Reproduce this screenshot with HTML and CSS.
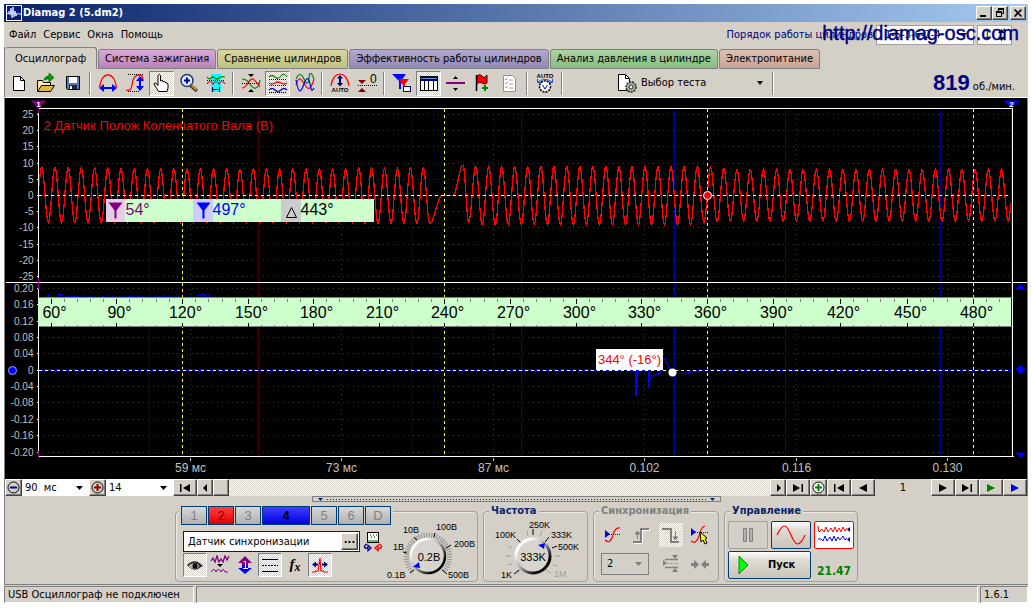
FILE: index.html
```html
<!DOCTYPE html>
<html lang="ru">
<head>
<meta charset="utf-8">
<title>Diamag 2 (5.dm2)</title>
<link rel="stylesheet" href="styles.css">
</head>
<body>
<div class="window">
  <header class="titlebar">
    <svg class="app-icon" width="16" height="16" viewBox="0 0 16 16"><rect width="16" height="16" fill="#fff"/><rect x="1" y="1" width="14" height="14" fill="#0a1a80"/><path d="M1 8.500h2V6l1 4 1-7 1 10 1-11 1 10 1-6 1 5 1-3 1 1h3" fill="none" stroke="#d8e4ff"/></svg>
    <h1>Diamag 2 (5.dm2)</h1>
    <div class="win-buttons">
      <button class="raised" aria-label="Свернуть"><svg width="12" height="10" viewBox="0 0 12 10"><path d="M2 7h6v2H2z"/></svg></button>
      <button class="raised" aria-label="Восстановить"><svg width="12" height="10" viewBox="0 0 12 10"><path d="M4 0h6v6H8V5h1V2H5v1H4zM2 3h6v6H2zm1 2v3h4V5z" fill-rule="evenodd"/></svg></button>
      <button class="raised close" aria-label="Закрыть"><svg width="12" height="10" viewBox="0 0 12 10"><path d="M2.500 1.500l7 7m0-7l-7 7" stroke="#000" stroke-width="1.600"/></svg></button>
    </div>
  </header>

  <div class="menubar">
    <nav class="menu"><button>Файл</button><button>Сервис</button><button>Окна</button><button>Помощь</button></nav>
    <div class="order">
      <label for="order">Порядок работы цилиндров</label>
      <span class="combo order-combo"><select id="order"><option>1-5-3-6-2-4</option></select><svg class="arrow" width="7" height="4" viewBox="0 0 7 4"><path d="M0 0h7L3.500 4z"/></svg></span>
      <span class="combo first-combo"><input aria-label="Цилиндр" value="1"><svg class="arrow" width="7" height="14" viewBox="0 0 7 14"><path d="M0 5h7L3.500 1zM0 9h7l-3.500 4z"/></svg></span>
      <span class="site">http://diamag-osc.com</span>
    </div>
  </div>

  <div class="tabs" role="tablist">
    <button role="tab" aria-selected="true" class="tab active">Осциллограф</button>
    <button role="tab" class="tab t-ign">Система зажигания</button>
    <button role="tab" class="tab t-cmp">Сравнение цилиндров</button>
    <button role="tab" class="tab t-eff">Эффективность работы цилиндров</button>
    <button role="tab" class="tab t-prs">Анализ давления в цилиндре</button>
    <button role="tab" class="tab t-pow">Электропитание</button>
  </div>

  <div class="toolbar">
    <div class="tools">
      <button class="tool" aria-label="Новый"><svg viewBox="0 0 20 20"><path d="M4.500 3.500h7l4 4v10h-11z" fill="#fff" stroke="#000"/><path d="M11.500 3.500v4h4" fill="none" stroke="#000"/></svg></button>
      <button class="tool" aria-label="Открыть"><svg viewBox="0 0 20 20"><path d="M1.500 18.500v-11h5l1 2h7v3" fill="#ffe9a0" stroke="#000"/><path d="M1.500 18.500l4-6h13l-4 6z" fill="#e0b840" stroke="#000"/><path d="M8 7q1-4 5-4V0l5 4.500-5 4.500V6q-3 0-5 1z" fill="#00a000" stroke="#004000" stroke-width=".6"/></svg></button>
      <button class="tool" aria-label="Сохранить"><svg viewBox="0 0 20 20"><path d="M3.500 3.500h13v13h-12l-1-1z" fill="#5878b8" stroke="#000"/><path d="M6 4h8v6H6z" fill="#fff"/><path d="M6 12h8v4H6z" fill="#202830"/><path d="M7 13h2v3H7z" fill="#fff"/></svg></button>
      <i class="sep"></i>
      <button class="tool" aria-label="Период"><svg viewBox="0 0 20 20"><path d="M1 14C3 12 2 9 4 6q2.500-4 6-4t6 4c2 3 1 6 3 8" fill="none" stroke="red" stroke-width="1.300"/><path d="M1 15l5-4v3h8v-3l5 4-5 4v-3H6v3z" fill="#00f"/></svg></button>
      <button class="tool wide" aria-label="Размах"><svg viewBox="0 0 22 20"><path d="M4 1.500h16M4 18.500h12" stroke="#000" stroke-dasharray="1 1"/><path d="M2 17q5 2 6-5 1-10 7-10 4 0 4 5" fill="none" stroke="red" stroke-width="1.300"/><path d="M16 3l4 5h-3v5h3l-4 5-4-5h3V8h-3z" fill="#00f"/></svg></button>
      <button class="tool pressed" aria-label="Рука"><svg viewBox="0 0 20 20"><path d="M6.500 18.500q-1-2-4-6.500-1-2 .5-2 1.500 0 3 2.500V2.500q1.500-2 2.500 0V8q1.500-1.500 2.500 0v1q1.500-1 2.500 0v1q2-.5 2.500 1v4l-1 3.500z" fill="#fff" stroke="#000"/></svg></button>
      <button class="tool" aria-label="Масштаб"><svg viewBox="0 0 20 20"><path d="M11 12l7 6" stroke="#503818" stroke-width="3.500"/><path d="M12 12l5.500 5" stroke="#e0a030" stroke-width="1.500"/><circle cx="8" cy="7.500" r="6" fill="#d8ecff" stroke="#203878" stroke-width="1.500"/><path d="M5 7.500h6M8 4.500v6" stroke="#0000c0" stroke-width="2"/></svg></button>
      <button class="tool" aria-label="Окно"><svg viewBox="0 0 20 20"><path d="M5 1h10v18H5z" fill="#0ff"/><path d="M1 4q2 3 4 1t4 0 4 0 6-1" fill="none" stroke="green" stroke-width="1.200"/><path d="M1 11q3-5 6 0 3-5 6 0 3-5 6 0" fill="none" stroke="red" stroke-width="1.200"/><path d="M1 7.500h18" stroke="#000" stroke-dasharray="1 1"/><path d="M6.500 14v5m7-5v5m-7-2.500h7" fill="none" stroke="#000080"/></svg></button>
      <i class="sep"></i>
      <button class="tool" aria-label="Совместить"><svg viewBox="0 0 20 20"><path d="M7 1h6l-3 3zM7 19h6l-3-3z"/><path d="M1 10.500h18" stroke="#000" stroke-dasharray="1 1"/><path d="M1 6q5 0 8 5t6 4 4-8" fill="none" stroke="green" stroke-width="1.200"/><path d="M1 15q3 0 6-5t5-4 7 8" fill="none" stroke="red" stroke-width="1.200"/></svg></button>
      <button class="tool pressed" aria-label="Разделить"><svg viewBox="0 0 20 20"><path d="M1 4q3-3 6 0t6-1 6 1" fill="none" stroke="green" stroke-width="1.200"/><path d="M1 6.500h18M1 12.500h18M1 19.500h18" stroke="#000" stroke-dasharray="1 1"/><path d="M1 10q3 2 6 0t6 0 6 0" fill="none" stroke="red" stroke-width="1.300"/><path d="M1 17q3-3 6 0t6 0 6 0" fill="none" stroke="#00f" stroke-width="1.300"/></svg></button>
      <button class="tool" aria-label="Наложить"><svg viewBox="0 0 20 20"><path d="M1 6q4-9 8 0t5-1 5 1" fill="none" stroke="green" stroke-width="1.200"/><path d="M1 12C4 2 6 6 10 12s6 4 9-6" fill="none" stroke="red" stroke-width="1.200"/><path d="M1 7c3 16 5 12 8 4s5-6 6 0 2 8 4 4" fill="none" stroke="#00f" stroke-width="1.200"/></svg></button>
      <i class="sep"></i>
      <button class="tool" aria-label="Авто"><svg viewBox="0 0 20 20"><path d="M1 13C2 5 6 1 10 1s8 4 9 12" fill="none" stroke="red" stroke-width="1.200"/><path d="M10 2l3 3.500h-2V10h2l-3 3.500L7 10h2V5.500H7z" fill="#000080"/><text x="10" y="19" class="t-auto" text-anchor="middle">AUTO</text></svg></button>
      <button class="tool wide" aria-label="Ноль"><svg viewBox="0 0 22 20"><path d="M2 7h8l-4 4zM2 19h8l-4-4z" fill="#800000"/><path d="M2 12.500h19" stroke="#000" stroke-dasharray="1 1"/><text x="14" y="10" class="t-zero">0</text></svg></button>
      <i class="sep"></i>
      <button class="tool" aria-label="Фильтр"><svg viewBox="0 0 20 20"><path d="M0 1h14l-5 7v8H7V8z" fill="#00f"/><path d="M6 6h11l-4 5v6h-2v-5z" fill="red"/><rect x="11.500" y="13.500" width="7" height="5" fill="#fff" stroke="#000080"/></svg></button>
      <button class="tool pressed" aria-label="Таблица"><svg viewBox="0 0 20 20"><rect x="1.500" y="3.500" width="17" height="14" fill="#fff" stroke="#000"/><path d="M2 4h16v4H2z" fill="#000080"/><path d="M2 5.500h16" stroke="#6090d0"/><path d="M5.500 8v9m4-9v9m5-9v9" stroke="#000"/></svg></button>
      <button class="tool" aria-label="Линия"><svg viewBox="0 0 20 20"><path d="M7 6h5L9.500 3zM7 15h5l-2.500 3z"/><path d="M0 10h19" stroke="purple" stroke-width="2"/></svg></button>
      <button class="tool" aria-label="Флаг"><svg viewBox="0 0 20 20"><path d="M3.500 2v16" stroke="#000" stroke-width="1.500"/><path d="M4 3q3-3 5 0t5-1v8q-3 2-5 0t-5 1z" fill="red" stroke="#400"/><path d="M12 12v6m-3-3h6" stroke="green" stroke-width="2"/></svg></button>
      <button class="tool" aria-label="Список"><svg viewBox="0 0 20 20"><path d="M3.500 2.500h9l3 3v13h-12z" fill="#fff" stroke="#909090"/><path d="M5 6l1 1 2-2M5 10l1 1 2-2M5 14l1 1 2-2M9 7h4M9 11h4M9 15h4" fill="none" stroke="#a0a0a0"/></svg></button>
      <i class="sep"></i>
      <button class="tool" aria-label="Автоизмерение"><svg viewBox="0 0 20 20"><text x="10" y="5" class="t-auto" text-anchor="middle">AUTO</text><path d="M3 9q7-5 14 0M2.500 6v3.500H6m11.500-3.500v3.500H14" fill="none" stroke="#2050c0"/><circle cx="10" cy="13.500" r="5.500" fill="#fff" stroke="#000" stroke-width="1.500" stroke-dasharray="2 1"/><path d="M7.500 12l2.500 4 2.500-4" fill="none" stroke="#00f"/></svg></button>
      <i class="sep"></i>
    </div>
    <button class="test"><svg width="20" height="20" viewBox="0 0 20 20"><path d="M1.500 1.500h7l4 4v12h-11z" fill="#fff" stroke="#000"/><path d="M8.500 1.500v4h4" fill="none" stroke="#000"/><circle cx="14" cy="14" r="5" fill="#a8b0a0" stroke="#202820" stroke-dasharray="2 1" stroke-width="1.500"/><circle cx="14" cy="14" r="2" fill="#fff" stroke="#202820"/></svg><span>Выбор теста</span><svg class="test-arrow" width="6" height="4" viewBox="0 0 6 4"><path d="M0 0h6L3 4z"/></svg></button>
    <i class="sep"></i>
    <p class="rpm"><strong>819</strong> об./мин.</p>
  </div>

  <main class="scope"><svg id="plot" role="img" aria-label="Осциллограмма"></svg></main>

  <div class="navbar">
    <button class="raised round" aria-label="Сжать"><svg width="15" height="15" viewBox="0 0 15 15"><circle cx="7.500" cy="7.500" r="5.500" fill="none" stroke="#000"/><path d="M4 7.500h7" stroke="#000080" stroke-width="2"/></svg></button>
    <span class="combo nav-combo"><select aria-label="Развёртка"><option>90&nbsp; мс</option></select><svg class="arrow" width="7" height="4" viewBox="0 0 7 4"><path d="M0 0h7L3.500 4z"/></svg></span>
    <button class="raised round" aria-label="Растянуть"><svg width="15" height="15" viewBox="0 0 15 15"><circle cx="7.500" cy="7.500" r="5.500" fill="none" stroke="#000"/><path d="M4 7.500h7M7.500 4v7" stroke="#900000" stroke-width="2"/></svg></button>
    <span class="combo nav-combo"><select aria-label="Масштаб"><option>14</option></select><svg class="arrow" width="7" height="4" viewBox="0 0 7 4"><path d="M0 0h7L3.500 4z"/></svg></span>
    <button class="raised step" aria-label="В начало"><svg width="12" height="8" viewBox="0 0 12 8"><path d="M1 0h1.500v8H1zM11 0v8L4 4z"/></svg></button>
    <div class="track">
      <button class="raised" aria-label="Влево"><svg width="5" height="8" viewBox="0 0 5 8"><path d="M4 0v8L0 4z"/></svg></button>
      <button class="raised" aria-label="Позиция"></button>
      <span class="rail"></span>
      <button class="raised" aria-label="Вправо"><svg width="5" height="8" viewBox="0 0 5 8"><path d="M1 0v8l4-4z"/></svg></button>
    </div>
    <button class="raised step" aria-label="В конец"><svg width="12" height="8" viewBox="0 0 12 8"><path d="M9.500 0H11v8H9.500zM1 0v8l7-4z"/></svg></button>
    <button class="raised round" aria-label="Добавить"><svg width="15" height="15" viewBox="0 0 15 15"><circle cx="7.500" cy="7.500" r="5.500" fill="#fff" stroke="#000"/><path d="M4 7.500h7M7.500 4v7" stroke="green" stroke-width="2"/></svg></button>
    <button class="raised step" aria-label="Первый кадр"><svg width="12" height="8" viewBox="0 0 12 8"><path d="M1 0h1.500v8H1zM11 0v8L4 4z"/></svg></button>
    <button class="raised step" aria-label="Предыдущий кадр"><svg width="12" height="8" viewBox="0 0 12 8"><path d="M10 0v8L2 4z"/></svg></button>
    <output class="frame-no">1</output>
    <button class="raised step" aria-label="Следующий кадр"><svg width="12" height="8" viewBox="0 0 12 8"><path d="M2 0v8l8-4z"/></svg></button>
    <button class="raised step" aria-label="Последний кадр"><svg width="12" height="8" viewBox="0 0 12 8"><path d="M9.500 0H11v8H9.500zM1 0v8l7-4z"/></svg></button>
    <button class="raised step" aria-label="Воспроизвести"><svg width="12" height="8" viewBox="0 0 12 8"><path d="M2 0v8l8-4z" fill="green"/></svg></button>
    <button class="raised step" aria-label="Вперёд"><svg width="12" height="8" viewBox="0 0 12 8"><path d="M2 0v8l8-4z" fill="#00f"/></svg></button>
  </div>

  <div class="splitter"><span class="grip"><svg width="5" height="3" viewBox="0 0 5 3"><path d="M0 0h5L2.500 3z"/></svg><i></i><svg width="5" height="3" viewBox="0 0 5 3"><path d="M0 0h5L2.500 3z"/></svg></span></div>

  <div class="panels">
    <section class="group channels-group">
      <div class="channels"><button>1</button><button class="ch-red">2</button><button>3</button><button class="ch-blue">4</button><button>5</button><button>6</button><button>D</button></div>
      <div class="sensor">
        <div class="sensor-row">
          <span class="sensor-box"><input aria-label="Датчик" value="Датчик синхронизации"><button class="raised" aria-label="Выбрать">...</button></span>
          <button class="tool swap" aria-label="Сменить"><svg viewBox="0 0 20 20"><rect x="4.500" y=".5" width="11" height="10" fill="#fff" stroke="#000"/><path d="M5 8h10v2H5z" fill="#70b070"/><path d="M7 3h1m2 0h1m2 0h1M8 5h1m2 0h1" stroke="#000"/><path d="M4 12q-4 2-2 4h3M5 13.500v5L8 16z" fill="none" stroke="#000080" stroke-width="1.300"/><path d="M16 12q4 2 2 4h-3m0-2.500v5L12 16z" fill="none" stroke="red" stroke-width="1.300"/></svg></button>
        </div>
        <div class="sensor-tools">
          <button class="tool pressed" aria-label="Показать"><svg viewBox="0 0 20 20"><path d="M2 10q8-8 16 1-1 1-2 1-6 6-13-1z" fill="#303030"/><ellipse cx="9" cy="11" rx="5" ry="2.500" fill="#b0b0b0"/><circle cx="10" cy="11" r="2.500"/></svg></button>
          <button class="tool" aria-label="Сгладить"><svg viewBox="0 0 20 20"><path d="M1 6l2-3 2 4 2-6 2 6 2-3 2 3 2-6 2 4 2-4" fill="none" stroke="purple" stroke-width="1.300"/><path d="M7 9h6l-3 3z"/><path d="M1 17q3-5 5 0 2-5 5 0 2-5 4 0h3" fill="none" stroke="purple"/></svg></button>
          <button class="tool" aria-label="Сместить"><svg viewBox="0 0 20 20"><path d="M10 1l7 7h-4v2H7V8H3z" fill="purple"/><path d="M10 19l7-6h-4v-3H7v3H3z" fill="#00f"/><path d="M8.500 6.500h2v7M8 13.500h5" fill="none" stroke="#fff"/></svg></button>
          <button class="tool pressed" aria-label="Линии"><svg viewBox="0 0 20 20"><path d="M2 4.500h16M2 16.500h16" stroke="#000"/><path d="M2 10.500h16" stroke="#000" stroke-dasharray="2 1"/></svg></button>
          <button class="tool fx" aria-label="Функция"><i>f<sub>x</sub></i></button>
          <button class="tool pressed" aria-label="Импульс"><svg viewBox="0 0 20 20"><path d="M2 17h3l1-1h2l2-13 1 13h2l1 1h4" fill="none" stroke="red" stroke-width="1.200"/><path d="M2 9.500l4-3v2h2v2H6v2zM18 9.500l-4-3v2h-2v2h2v2z" fill="#000080"/></svg></button>
        </div>
      </div>
      <svg class="knob" width="92" height="62" viewBox="386 519 92 62">
        <defs>
          <linearGradient id="rim" x1="0" y1="0" x2="1" y2="1"><stop offset=".2" stop-color="#fff"/><stop offset=".5" stop-color="#a0a0a0"/><stop offset=".8" stop-color="#000"/></linearGradient>
        </defs>
        <path d="M413 571a21.500 21.500 0 1 1 32 0" fill="none" stroke="#909090" stroke-width="5" stroke-dasharray="1 1.500"/>
        <path d="M415 570l-4 3M408 553l-4-1M418 540l-3-3M435 537l1-4M447 548l5-3M443 570l5 4" stroke="#000"/>
        <circle cx="429" cy="556" r="17" fill="#d8d5ce" stroke="url(#rim)" stroke-width="2.500"/>
        <path d="M414 567l6-5 1 6z" fill="#00f"/>
        <text x="430" y="561" class="k-val" text-anchor="middle">0.2В</text>
        <g class="k-lab"><text x="388" y="578">0.1В</text><text x="394" y="550">1В</text><text x="404" y="533">10В</text><text x="437" y="530">100В</text><text x="455" y="547">200В</text><text x="449" y="578">500В</text></g>
      </svg>
    </section>
    <section class="group rate">
      <h2>Частота</h2>
      <svg class="knob" width="100" height="62" viewBox="486 519 100 62">
        <path d="M520 570l-3 3M512 564l-4 1M511 556h-5M512 548l-4-2M528 536l-1-5M540 536l2-5M555 556h5M553 565l4 1" stroke="#a0a0a0"/>
        <path d="M519 570l-5 4M521 543l-4-4M533 535v-6M545 542l4-5M552 548l5-2" stroke="#000"/>
        <path d="M546 570l5 4" stroke="#a0a0a0"/>
        <circle cx="533" cy="556" r="17" fill="#d8d5ce" stroke="url(#rim)" stroke-width="3"/>
        <path d="M538 545l7-2-1 6z" fill="#00f"/>
        <text x="533" y="561" class="k-val" text-anchor="middle">333K</text>
        <g class="k-lab"><text x="501" y="578">1K</text><text x="495" y="538">100K</text><text x="529" y="528">250K</text><text x="551" y="538">333K</text><text x="558" y="550">500K</text><text x="554" y="577" class="dim">1M</text></g>
      </svg>
    </section>
    <section class="group sync">
      <h2 class="dim">Синхронизация</h2>
      <div class="sync-grid">
        <button class="tool" aria-label="Уровень"><svg viewBox="0 0 20 20"><path d="M2 5v8l5-4z" fill="#00f"/><path d="M6 9.500h12" stroke="#00f" stroke-dasharray="1 1"/><path d="M2 15q5 5 8-5 2-8 7-7" fill="none" stroke="red" stroke-width="1.200"/></svg></button>
        <button class="tool" aria-label="Фронт"><svg viewBox="0 0 20 20"><path d="M2 18h8V5h8" fill="none" stroke="#fff" stroke-width="2"/><path d="M1 17h8V4h8" fill="none" stroke="#808080" stroke-width="2"/><path d="M5.500 14V8M3 9l2.500-3L8 9z" fill="#808080" stroke="#808080"/></svg></button>
        <button class="tool dither" aria-label="Спад"><svg viewBox="0 0 20 20"><path d="M1 4h9v13h8" fill="none" stroke="#808080" stroke-width="2"/><path d="M14.500 6v6M12 12l2.500 3 2.500-3z" fill="#808080" stroke="#808080"/></svg></button>
        <button class="tool" aria-label="Указать уровень"><svg viewBox="0 0 20 20"><path d="M1 3v8l5-4z" fill="#00f"/><path d="M5 7.500h14" stroke="#00f" stroke-dasharray="1 1"/><path d="M1 16q5 4 8-5 2-9 6-10" fill="none" stroke="red" stroke-width="1.200"/><path d="M10 7l7 6-2 1 2 4-2 1-2-4-2 2z" fill="#ff0" stroke="#000"/></svg></button>
        <span class="combo sync-combo"><select aria-label="Канал синхронизации"><option>2</option></select><svg class="arrow" width="7" height="4" viewBox="0 0 7 4"><path d="M0 0h7L3.500 4z" fill="#808080"/></svg></span>
        <button class="tool" aria-label="Порог"><svg viewBox="0 0 20 20"><path d="M2 6v6l4-3zM11 1h6l-3 4zM11 18h6l-3-4z" fill="#808080"/><path d="M4 5.500h13M4 13.500h13" stroke="#808080" stroke-width="1.500"/><path d="M6 9.500h11" stroke="#808080" stroke-dasharray="1 1"/></svg></button>
        <button class="tool" aria-label="Сузить"><svg viewBox="0 0 20 20"><path d="M1 9h3V6l5 4.500L4 15v-3H1zM19 9h-3V6l-5 4.500 5 4.500v-3h3z" fill="#808080"/></svg></button>
      </div>
    </section>
    <section class="group control">
      <h2>Управление</h2>
      <div class="control-grid">
        <button class="big off" aria-label="Пауза"><svg width="14" height="16" viewBox="0 0 14 16"><path d="M2.500 1.500h3v13h-3zM8.500 1.500h3v13h-3z" fill="#b0b0b0" stroke="#808080"/></svg></button>
        <button class="big" aria-label="Синус"><svg width="30" height="20" viewBox="0 0 30 20"><path d="M1 10C4 4 6 1 8.500 1 14 1 16 19 21.500 19c3 0 5-3 7.500-9" fill="none" stroke="red" stroke-width="1.200"/></svg></button>
        <button class="big hot" aria-label="Каналы"><svg width="34" height="20" viewBox="0 0 34 20"><path d="M1 1l1 6 3-3 2 3 2-5 2 5 3-4 2 4 2-5 2 5 2-4 2 4 2-5 2 4 2-3" fill="none" stroke="red"/><path d="M1 14h3l2 2 2-5 2 5 3-4 2 4 2-5 2 5 2-4 2 3 3-4 2 4 2-2" fill="none" stroke="#00f"/><path d="M33 2v5l-3-2.500zM33 12v5l-3-2.500z" fill="#000080"/></svg></button>
        <button class="big start"><svg width="12" height="20" viewBox="0 0 12 20"><path d="M1 1l9 9-9 9z" fill="#0f0" stroke="#208020"/></svg><span>Пуск</span></button>
        <output class="volt">21.47</output>
      </div>
    </section>
  </div>

  <footer class="statusbar"><span class="s-usb">USB Осциллограф не подключен</span><span class="s-mid"></span><span class="s-ver">1.6.1</span></footer>
</div>
<script src="plot.js"></script>
</body>
</html>
```
FILE: styles.css
```css
* { box-sizing: border-box; }

body {
  margin: 0;
  padding: 4px 4px 5px;
  min-height: 100vh;
  display: flex;
  background: #fff;
  color: #000;
  font: 11px/14px Tahoma, "DejaVu Sans Condensed", sans-serif;
}

button, input, select { font: inherit; color: inherit; margin: 0; padding: 0; border: 0; background: none; border-radius: 0; }
button { display: flex; align-items: center; justify-content: center; white-space: nowrap; }
select { appearance: none; }
svg { display: block; flex: none; }

.window { flex: 1; min-width: 0; display: flex; flex-direction: column; background: #d4d0c8; }

.raised {
  background: #d4d0c8;
  border: 1px solid;
  border-color: #fff #404040 #404040 #fff;
  box-shadow: inset -1px -1px #808080;
}

.titlebar { display: flex; align-items: center; height: 18px; padding: 0 2px; gap: 1px; background: linear-gradient(90deg, #0a246a, #a6caf0); }
.titlebar h1 { margin: 0; flex: 1; color: #fff; font-size: 11px; }
.win-buttons { display: flex; }
.win-buttons button { width: 16px; height: 14px; }
.win-buttons .close { margin-left: 2px; }

.menubar { display: flex; justify-content: space-between; align-items: center; height: 25px; padding: 0 16px 0 5px; }
.menu { display: flex; gap: 7px; }
.order { position: relative; display: flex; align-items: center; gap: 3px; color: #000080; height: 21px; }
.site { position: absolute; right: -7px; top: -3px; font: 20px/24px "Liberation Sans", Arial, sans-serif; white-space: nowrap; -webkit-text-stroke: 0.4px #000080; }

.combo { display: grid; align-items: center; background: #fff; }
.combo > * { grid-area: 1 / 1; }
.combo select, .combo input { width: 100%; height: 100%; padding-left: 3px; color: #000; }
.combo .arrow { justify-self: end; margin-right: 6px; pointer-events: none; }
.order-combo { width: 98px; height: 20px; border: 1px solid #a0a0a0; }
.order-combo select { padding-left: 8px; }
.first-combo { width: 35px; height: 20px; border: 1px solid #a0a0a0; }
.first-combo input { padding-left: 6px; }

.tabs { display: flex; align-items: flex-end; gap: 1px; height: 22px; border-left: 1px solid #808080; }
.tab { height: 20px; padding: 0 6px; border: 1px solid #808080; border-radius: 3px 3px 0 0; }
.tab.active { height: 22px; padding: 0 10px; border-bottom: 0; border-left: 0; background: #d4d0c8; }
.t-ign { background: linear-gradient(#d8a8d8, #b884b8); }
.t-cmp { background: linear-gradient(#d8d8a0, #c0c080); }
.t-eff { background: linear-gradient(#b4aad0, #9088b4); }
.t-prs { background: linear-gradient(#acd4a4, #88bc80); }
.t-pow { background: linear-gradient(#dcc0b4, #c8a494); }

.toolbar { display: flex; align-items: center; height: 29px; padding-left: 1px; border-left: 1px solid #808080; border-bottom: 1px solid #fff; }
.tools { display: flex; align-items: center; gap: 2px; height: 100%; }
.tool { width: 25px; height: 25px; border: 1px solid transparent; }
.tool svg { width: 20px; height: 20px; }
.tool.wide svg { width: 22px; }
.pressed { background: repeating-conic-gradient(#fff 0 25%, #d4d0c8 0 50%) 0 0 / 2px 2px; border-color: #808080 #fff #fff #808080; }
.dither { background: repeating-conic-gradient(#fff 0 25%, #d4d0c8 0 50%) 0 0 / 2px 2px; }
.sep { width: 2px; height: 23px; margin: 0 2px; border-left: 1px solid #808080; border-right: 1px solid #fff; }
.t-auto { font: bold 6px "Liberation Sans", Arial, sans-serif; }
.t-zero { font: 12px "Liberation Sans", Arial, sans-serif; }
.test { flex: 0 1 205px; padding-left: 52px; padding-right: 7px; gap: 4px; }
.test span { flex: 1; text-align: left; }
.rpm { flex: 1; margin: 0; padding-right: 13px; text-align: right; white-space: nowrap; }
.rpm strong { color: #000080; font: bold 22px/24px "Liberation Sans", Arial, sans-serif; }

.scope { flex: 1 1 0; min-height: 300px; display: flex; background: #000; border-left: 1px solid #808080; border-right: 1px solid #808080; }
#plot { flex: 1; min-width: 0; font-family: "Liberation Sans", Arial, sans-serif; }
#plot .axis { font-size: 10px; fill: #c0c0c0; text-anchor: end; }
#plot .time { font-size: 12px; fill: #c0c0c0; text-anchor: middle; }
#plot .name { font-size: 13px; }
#plot .ruler { font-size: 16px; text-anchor: middle; }
#plot .mark { font-size: 16px; }
#plot .tip { font-size: 13px; fill: red; text-anchor: middle; }
#plot .pin { font-size: 8px; font-weight: bold; fill: #fff; text-anchor: middle; }

.navbar { display: flex; height: 17px; border-left: 1px solid #808080; border-right: 1px solid #808080; }
.navbar .round { width: 17px; }
.navbar .step { width: 24px; }
.nav-combo { width: 67px; }
.track { flex: 1; display: flex; }
.track button { width: 16px; }
.rail { flex: 1; background: repeating-conic-gradient(#fff 0 25%, #d4d0c8 0 50%) 0 0 / 2px 2px; }
.frame-no { width: 56px; text-align: center; line-height: 17px; }

.splitter { display: flex; justify-content: center; height: 6px; border-left: 1px solid #808080; }
.grip { display: flex; align-items: center; gap: 4px; width: 40%; padding: 0 5px; border: 1px solid #808080; fill: #0a246a; }
.grip i { flex: 1; height: 1px; background: repeating-linear-gradient(90deg, #0a246a 0 1px, transparent 1px 3px); }

.panels { display: flex; justify-content: center; gap: 5px; padding: 9px 0 2px; border-left: 1px solid #808080; border-bottom: 1px solid #808080; }
.group { height: 71px; border: 1px solid #a0a0a0; border-radius: 4px; box-shadow: inset 1px 1px #ece9e4; }
.group h2 { width: max-content; margin: -8px 0 0 5px; padding: 0 2px; background: #d4d0c8; color: #0a246a; font-size: 11px; line-height: 14px; }
.group h2.dim { color: #808080; }

.channels-group { display: grid; grid-template-columns: 208px 92px; grid-template-rows: 14px 1fr; column-gap: 1px; }
.channels { grid-column: 1 / 3; display: flex; gap: 1px; width: max-content; height: 19px; margin: -6px 0 0 3px; padding: 0 2px; background: #d4d0c8; }
.channels button { width: 26px; border: 1px solid #003c74; background: linear-gradient(#d8d8d8, #b0b0b0); color: #808080; font: 13px/16px "Liberation Sans", Arial, sans-serif; }
.channels .ch-red { background: linear-gradient(#ff4040, #e00000); color: #600000; }
.channels .ch-blue { width: 48px; background: linear-gradient(#4040ff, #0000e0); color: #000; font-weight: bold; }
.sensor { padding: 5px 0 0 7px; }
.sensor-row { display: flex; align-items: center; gap: 2px; height: 21px; }
.sensor-box { display: flex; flex: 1; height: 21px; padding: 1px; border: 1px solid #00f; background: #fff; }
.sensor-box input { flex: 1; min-width: 0; padding-left: 3px; }
.sensor-box button { width: 17px; padding-bottom: 4px; font-weight: bold; }
.swap { width: 22px; }
.sensor-tools { display: flex; margin-top: 1px; gap: 1px; }
.sensor-tools .tool { width: 24px; height: 24px; }
.fx i { font: italic bold 15px/16px "Liberation Serif", serif; }
.fx sub { font-size: 12px; vertical-align: -2px; }

.knob { overflow: visible; }
.channels-group .knob { margin-top: -7px; }
.k-val { font: 11px "Liberation Sans", Arial, sans-serif; }
.k-lab { font: 9px "Liberation Sans", Arial, sans-serif; }
.k-lab .dim { fill: #a0a0a0; }
.rate { width: 105px; }
.rate .knob { margin: 1px 0 0 2px; }
.sync { width: 126px; }
.sync-grid { display: grid; grid-template-columns: repeat(4, 1fr); gap: 5px 4px; padding: 5px 5px 0 7px; align-items: center; }
.sync-grid .tool { width: 24px; height: 24px; }
.sync-combo { grid-column: span 2; width: 48px; height: 22px; border: 1px solid #808080; background: #d4d0c8; }
.sync-combo select { padding-left: 5px; }
.control { width: 134px; }
.control-grid { display: grid; grid-template-columns: repeat(3, 40px); gap: 2px 3px; padding: 3px 3px 0; }
.big { height: 28px; border: 1px solid #003c74; border-radius: 2px; background: linear-gradient(#fff, #e0dcd4 30%, #c8c4b8); }
.big.off { border-color: #a0a0a0; background: #d4d0c8; }
.big.hot { border-color: red; background: #fff; }
.start { grid-column: span 2; justify-content: flex-start; padding-left: 9px; gap: 18px; font-weight: bold; }
.volt { align-self: end; justify-self: center; color: green; font-size: 12px; font-weight: bold; line-height: 16px; }

.statusbar { display: flex; gap: 2px; height: 18px; padding-top: 1px; }
.statusbar span { padding: 0 3px; border: 1px solid; border-color: #808080 #fff #fff #808080; line-height: 15px; }
.s-usb { width: 190px; white-space: nowrap; }
.s-mid { flex: 1; }
.s-ver { width: 48px; }
```
FILE: plot.js
```js
// Oscillogram drawing. Coordinates are given on a 1022 x 381 base grid
// whose origin is (5, 98), and are scaled to the size of the plot.
const plot = document.getElementById('plot');
const BASE = { x: 5, y: 98, w: 1022, h: 381 };

const TIMES = [[190, '59 мс'], [341, '73 мс'], [493, '87 мс'], [644, '0.102'], [796, '0.116'], [947, '0.130']];
const RULER = [51, 116, 182, 248, 313, 379, 444, 510, 576, 641, 707, 773, 840, 907, 973];

function crankWave() {
  const pts = [];
  const extremes = [[35, 221]];
  const addPeaks = (from, step, count, top, bottom) => {
    for (let i = 0; i < count; i++) {
      extremes.push([from + i * step, top(i)], [from + (i + 0.5) * step, bottom(i)]);
    }
  };
  addPeaks(41.7, 13.22, 24, i => 166.5 + Math.min(i, 8) * 0.25, () => 222);
  addPeaks(358.7, 12.92, 6, () => 167.5, () => 223);
  extremes.push([442, 195], [453, 195]);
  extremes.push([463, 164.5], [468.7, 221.5]);
  addPeaks(475.7, 13.02, 17, () => 166, () => 224);
  addPeaks(697.3, 13.23, 25, i => Math.min(166 + i, 169), i => Math.max(222 - i, 220.5));
  for (let i = 1; i < extremes.length; i++) {
    const [x0, y0] = extremes[i - 1], [x1, y1] = extremes[i];
    for (let k = 0; k < 10; k++) {
      const t = k / 10, e = (1 - Math.cos(Math.PI * t)) / 2;
      const x = x0 + (x1 - x0) * t;
      if (x >= 39 && x <= 1011) pts.push([x, y0 + (y1 - y0) * e]);
    }
  }
  return pts;
}

function syncWave() {
  const pts = [];
  for (let x = 39; x < 630; x += 12) pts.push([x, 370], [x + 6, 370], [x + 6, 369], [x + 12, 369]);
  pts.push([636, 370], [636, 395], [637, 388], [638, 370], [649, 370], [649, 386], [650, 378], [654, 375], [660, 373],
    [661, 371], [661, 358], [664, 358], [667, 362], [669, 367], [672, 371], [677, 373], [684, 373], [692, 371], [705, 370]);
  for (let x = 711; x < 1000; x += 12) pts.push([x, 369], [x + 6, 369], [x + 6, 370], [x + 12, 370]);
  return pts;
}

function draw() {
  const W = plot.clientWidth, H = plot.clientHeight;
  const fx = v => (v - BASE.x) * W / BASE.w, fy = v => (v - BASE.y) * H / BASE.h;
  const X = v => Math.round(fx(v)) + 0.5, Y = v => Math.round(fy(v)) + 0.5;
  const out = [];
  const line = (x1, y1, x2, y2, color, extra = '') =>
    out.push(`<line x1="${X(x1)}" y1="${Y(y1)}" x2="${X(x2)}" y2="${Y(y2)}" stroke="${color}" ${extra}/>`);
  const text = (x, y, cls, str, extra = '') =>
    out.push(`<text x="${X(x)}" y="${Y(y) - 0.5}" class="${cls}" ${extra}>${str}</text>`);
  const poly = (pts, color) =>
    out.push(`<polyline points="${pts.map(p => fx(p[0]).toFixed(1) + ',' + (fy(p[1]) + 0.5).toFixed(1)).join(' ')}" fill="none" stroke="${color}" stroke-width="1.3"/>`);
  const shape = (x, y, d, fill, extra = '') =>
    out.push(`<path transform="translate(${X(x)} ${Y(y)})" d="${d}" fill="${fill}" ${extra}/>`);
  const rect = (x1, y1, x2, y2, fill) =>
    out.push(`<rect x="${X(x1) - 0.5}" y="${Y(y1) - 0.5}" width="${X(x2) - X(x1)}" height="${Y(y2) - Y(y1)}" fill="${fill}"/>`);

  out.push('<g shape-rendering="crispEdges">');
  for (let i = 0; i <= 10; i++) {
    for (const top of [114, 288]) {
      const y = top + i * (top === 114 ? 16.2 : 16.35);
      line(42, y, 1010, y, '#3a3a08', 'stroke-dasharray="1 4"');
      line(36, y, 38, y, '#fff');
    }
  }
  for (const [x] of TIMES) {
    line(x, 113, x, 456, '#3a3a08', 'stroke-dasharray="1 4"');
    line(x, 457, x, 460, '#c0c0c0');
  }
  for (const x of [149, 411]) line(x, 109, x, 455, '#000070');
  for (const x of [674, 940]) line(x, 109, x, 455, '#0000a0');
  for (const x of [258, 521, 785]) line(x, 109, x, 455, '#480000');
  line(38, 108, 1012, 108, '#fff');
  line(5, 282, 1027, 282, '#fff');
  out.push('</g>');
  text(43, 130, 'name', '2 Датчик Полож Коленчатого Вала (В)', 'fill="red"');
  text(44, 303, 'name', '4 Датчик синхронизации (В)', 'fill="#00f"');

  out.push('<g shape-rendering="crispEdges">');
  poly(crankWave(), 'red');
  for (const x of [182, 444]) line(x, 108, x, 455, '#ff0', 'stroke-dasharray="3 3"');
  for (const x of [707, 973]) line(x, 108, x, 455, '#ffff60', 'stroke-dasharray="3 3"');
  poly(syncWave(), '#00f');
  line(38, 195, 1012, 195, '#fff', 'stroke-dasharray="3 3"');
  line(38, 370, 1012, 370, '#fff', 'stroke-dasharray="3 3"');
  line(1011, 108, 1011, 456, '#00f');
  line(1012, 108, 1012, 456, '#fff');
  line(38, 108, 38, 456, '#fff');
  line(38, 456, 1013, 456, '#fff');
  for (const [a, b] of [[100, 112], [277, 288], [450, 456]]) line(38, a, 38, b, '#900090');

  rect(38, 297, 1011, 327, '#ccffcc');
  line(38, 297, 1011, 297, '#808080');
  line(38, 326, 1011, 326, '#808080');
  RULER.forEach((x, i) => {
    line(x, 298, x, 303, '#000');
    line(x, 322, x, 326, '#000');
    const step = ((RULER[i + 1] || x + 66) - x) / 5;
    for (let k = 1; k < 5; k++) {
      const m = x + k * step;
      if (m > 1009) break;
      line(m, 298, m, 301, '#808080');
      line(m, 324, m, 326, '#808080');
    }
  });
  rect(106, 199, 374, 222, '#ccffcc');
  rect(106, 199, 125, 222, '#e6cce6');
  rect(193, 199, 213, 222, '#ccccff');
  rect(281, 199, 301, 222, '#cccccc');
  rect(596, 349, 663, 370, '#fff');
  out.push('</g>');

  RULER.forEach((x, i) => text(x + 3, 318, 'ruler', 60 + i * 30 + '°'));
  text(125, 215, 'mark', '54°', 'fill="purple"');
  text(212, 215, 'mark', '497°', 'fill="#00f"');
  text(300, 215, 'mark', '443°');
  shape(115, 202, 'M-7 0h14l-6 8v8h-2v-8z', 'purple');
  shape(203, 202, 'M-7 0h14l-6 8v8h-2v-8z', '#00f');
  shape(291, 207, 'M0 0l5 10h-10z', 'none', 'stroke="#000"');
  text(629, 364, 'tip', '344° (-16°)');

  for (let i = 0; i <= 10; i++) {
    text(33, 118 + i * 16.2, 'axis', String(25 - i * 5));
    const v = 0.2 - i * 0.04;
    text(33, 292 + i * 16.35, 'axis', i === 5 ? '0' : v.toFixed(2));
  }
  TIMES.forEach(([x, s]) => text(x, 472, 'time', s));

  shape(38, 100, 'M-8 0h16l-8 8z', 'purple');
  text(38, 107, 'pin', '1');
  shape(1011, 100, 'M-8 0h16l-8 8z', '#00f');
  text(1011, 107, 'pin', '2');
  shape(1020, 283, 'M0 0l5 6h-10z', '#00f');
  shape(1020, 369, 'M0 -5l5 5-5 5-5-5z', '#00f');
  shape(1020, 458, 'M0 0l5-6h-10z', '#00f');
  shape(12, 370, 'M-4 0a4 4 0 1 0 8 0a4 4 0 1 0-8 0z', '#00f', 'stroke="#a0a0ff"');
  shape(707, 195, 'M-4 0a4 4 0 1 0 8 0a4 4 0 1 0-8 0z', 'red', 'stroke="#fff"');
  shape(672, 372, 'M-4 0a4 4 0 1 0 8 0a4 4 0 1 0-8 0z', '#fff');
  plot.innerHTML = out.join('');
}

new ResizeObserver(draw).observe(plot.parentElement);
draw();
```
